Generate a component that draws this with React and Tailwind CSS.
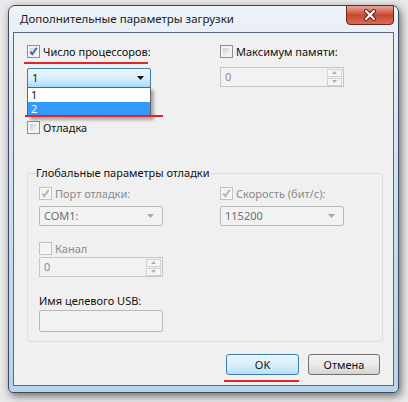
import React from "react";

const Check = ({ checked, disabled }) => (
  <span
    className={`relative flex w-[13px] h-[13px] shrink-0 border p-[2px] ${
      disabled ? "border-[#c2c2c2] bg-[#f6f6f6]" : "border-[#8e8f8f] bg-[#f4f4f4]"
    }`}
  >
    <span
      className={`w-full h-full ${
        disabled
          ? "bg-[#f2f2f2]"
          : "bg-gradient-to-br from-[#cdd1d6] to-[#f7f7f7]"
      }`}
    />
    {checked && (
      <svg className="absolute left-0 top-0" width="11" height="11" viewBox="0 0 11 11">
        <path
          d="M2.2 5.6 L4.3 8.2 L8.8 1.8"
          fill="none"
          stroke={disabled ? "#b4b4b4" : "#4d62a0"}
          strokeWidth="1.9"
        />
      </svg>
    )}
  </span>
);

const CheckRow = ({ checked, disabled, label }) => (
  <div className="flex items-center h-[13px] gap-[3px]">
    <Check checked={checked} disabled={disabled} />
    <span className={`leading-[13px] ${disabled ? "text-[#8a8a8a]" : "text-[#111]"}`}>{label}</span>
  </div>
);

const Arrow = ({ color }) => (
  <svg width="7" height="4" viewBox="0 0 7 4">
    <path d="M0 0 L7 0 L3.5 4 Z" fill={color} />
  </svg>
);

const DisabledCombo = ({ value, w }) => (
  <div
    className={`${w} h-[20px] flex items-center justify-between px-[4px] pr-[8px] border border-[#b9b9b9] rounded-[2px] bg-[#f2f2f2] text-[#6e6e6e]`}
  >
    <span className="leading-[14px]">{value}</span>
    <Arrow color="#a9a9a9" />
  </div>
);

const Spin = ({ w }) => (
  <div className={`${w} h-[20px] flex items-center justify-between pl-[4px] pr-[1px] border border-[#c6c6c6] bg-[#f2f2f2] text-[#8a8a8a]`}>
    <span className="leading-[14px]">0</span>
    <div className="flex flex-col gap-[1px]">
      <div className="w-[15px] h-[8px] border border-[#d2d2d2] bg-[#f6f6f6] flex items-center justify-center">
        <svg width="5" height="3" viewBox="0 0 5 3"><path d="M0 3 L5 3 L2.5 0 Z" fill="#b0b0b0" /></svg>
      </div>
      <div className="w-[15px] h-[8px] border border-[#d2d2d2] bg-[#f6f6f6] flex items-center justify-center">
        <svg width="5" height="3" viewBox="0 0 5 3"><path d="M0 0 L5 0 L2.5 3 Z" fill="#b0b0b0" /></svg>
      </div>
    </div>
  </div>
);

export default function App() {
  return (
    <div className="w-[408px] h-[402px] overflow-hidden bg-[#e9e9e9] font-['Noto_Sans',sans-serif] text-[11px] pt-[5px] pl-[8px]">
      <div className="relative w-[391px] h-[388px] border border-[#3b4a5c] rounded-t-[7px] rounded-b-[5px] bg-gradient-to-b from-[#edf2f7] via-[#cddff1] to-[#b9d3ed] shadow-[2px_3px_9px_rgba(0,0,0,0.55)] pl-[4px]">
        <div className="h-[26px] flex items-center pl-[7px] text-[#1c1c1c] text-[11.5px] leading-[14px]">
          Дополнительные параметры загрузки
        </div>
        <div className="absolute top-[-1px] right-[4px] w-[48px] h-[20px] rounded-b-[4px] border border-[#6a2a22] bg-gradient-to-b from-[#e6a698] via-[#c9462f] to-[#d86a52] flex items-center justify-center">
          <svg width="14" height="12" viewBox="0 0 14 12">
            <path d="M3 2 L11 10 M11 2 L3 10" stroke="#5a1a12" strokeWidth="4" strokeLinecap="round" />
            <path d="M3 2 L11 10 M11 2 L3 10" stroke="#ffffff" strokeWidth="2.2" strokeLinecap="round" />
          </svg>
        </div>

        <div className="relative w-[381px] h-[354px] border border-[#5a6a7e] bg-[#f0f0f0] pl-[13px] pt-[12px]">
          <div className="flex">
            <div className="w-[193px]">
              <CheckRow checked label="Число процессоров:" />
              <div className="relative mt-[10px]">
                <div className="w-[124px] h-[20px] flex items-center justify-between pl-[4px] pr-[6px] border border-[#3c7fb1] rounded-[2px] bg-gradient-to-b from-[#eaf6fd] via-[#d9f0fc] to-[#a9dbf6]">
                  <span className="leading-[14px] text-[#111]">1</span>
                  <Arrow color="#111" />
                </div>
                <div className="absolute left-0 top-[19px] w-[124px] border border-[#646464] bg-white shadow-[3px_3px_3px_rgba(0,0,0,0.3)] z-10">
                  <div className="h-[14px] pl-[3px] leading-[14px] text-[#111]">1</div>
                  <div className="h-[14px] pl-[3px] leading-[14px] bg-[#3399ff] text-white">2</div>
                </div>
              </div>
              <div className="mt-[33px]">
                <CheckRow label="Отладка" />
              </div>
            </div>
            <div>
              <CheckRow label="Максимум памяти:" />
              <div className="mt-[9px]">
                <Spin w="w-[124px]" />
              </div>
            </div>
          </div>

          <div className="relative mt-[39px] w-[356px] h-[169px] border border-[#d5dfe5] rounded-[3px] pl-[11px] pt-[13px]">
            <span className="absolute left-[7px] top-[-8px] px-[1px] bg-[#f0f0f0] leading-[14px] text-[#111]">
              Глобальные параметры отладки
            </span>
            <div className="flex">
              <div className="w-[181px]">
                <CheckRow checked disabled label="Порт отладки:" />
                <div className="mt-[6px]">
                  <DisabledCombo value="COM1:" w="w-[124px]" />
                </div>
              </div>
              <div>
                <CheckRow checked disabled label="Скорость (бит/с):" />
                <div className="mt-[6px]">
                  <DisabledCombo value="115200" w="w-[124px]" />
                </div>
              </div>
            </div>
            <div className="mt-[16px]">
              <CheckRow disabled label="Канал" />
            </div>
            <div className="mt-[2px]">
              <Spin w="w-[124px]" />
            </div>
            <div className="mt-[16px] leading-[15px] text-[#111]">Имя целевого USB:</div>
            <div className="mt-[2px] w-[124px] h-[22px] border border-[#b9b9b9] rounded-[2px] bg-[#f2f2f2]" />
          </div>

          <div className="flex justify-end gap-[9px] pr-[13px] mt-[12px]">
            <button className="w-[73px] h-[21px] rounded-[3px] border border-[#3c7fb1] bg-gradient-to-b from-[#eaf6fd] via-[#d9f0fc] to-[#b6e0f7] text-[#111] leading-[14px]">
              OK
            </button>
            <button className="w-[72px] h-[21px] rounded-[3px] border border-[#707070] bg-gradient-to-b from-[#f2f2f2] via-[#ebebeb] to-[#d4d4d4] text-[#111] leading-[14px]">
              Отмена
            </button>
          </div>

          <div className="absolute left-[10px] top-[29px] w-[124px] h-[2px] bg-[#e0242a]" />
          <div className="absolute left-[11px] top-[82px] w-[138px] h-[2px] bg-[#e0242a] z-20" />
          <div className="absolute left-[210px] top-[347px] w-[75px] h-[2px] bg-[#e0242a]" />
        </div>
      </div>
    </div>
  );
}
